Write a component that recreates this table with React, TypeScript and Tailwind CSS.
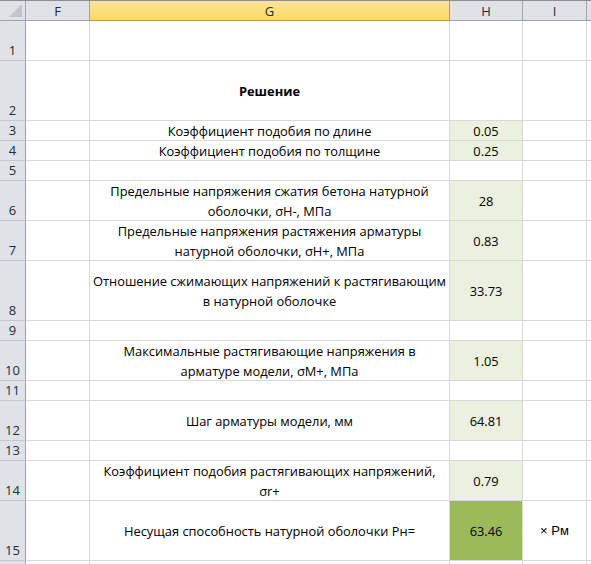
import React from "react";

type Row = {
  n: number;
  h: string;
  g?: string[];
  bold?: boolean;
  v?: string;
  hBg: string;
  i?: string;
};

const rows: Row[] = [
  { n: 1, h: "h-[40px]", hBg: "bg-white" },
  { n: 2, h: "h-[60px]", g: ["Решение"], bold: true, hBg: "bg-white" },
  { n: 3, h: "h-[20px]", g: ["Коэффициент подобия по длине"], v: "0.05", hBg: "bg-[#ebf1de]" },
  { n: 4, h: "h-[20px]", g: ["Коэффициент подобия по толщине"], v: "0.25", hBg: "bg-[#ebf1de]" },
  { n: 5, h: "h-[20px]", hBg: "bg-white" },
  {
    n: 6,
    h: "h-[40px]",
    g: ["Предельные напряжения сжатия бетона натурной", "оболочки, σН-, МПа"],
    v: "28",
    hBg: "bg-[#ebf1de]",
  },
  {
    n: 7,
    h: "h-[40px]",
    g: ["Предельные напряжения растяжения арматуры", "натурной оболочки, σН+, МПа"],
    v: "0.83",
    hBg: "bg-[#ebf1de]",
  },
  {
    n: 8,
    h: "h-[60px]",
    g: ["Отношение сжимающих напряжений к растягивающим", "в натурной оболочке"],
    v: "33.73",
    hBg: "bg-[#ebf1de]",
  },
  { n: 9, h: "h-[20px]", hBg: "bg-white" },
  {
    n: 10,
    h: "h-[40px]",
    g: ["Максимальные растягивающие напряжения в", "арматуре модели, σМ+, МПа"],
    v: "1.05",
    hBg: "bg-[#ebf1de]",
  },
  { n: 11, h: "h-[20px]", hBg: "bg-white" },
  { n: 12, h: "h-[40px]", g: ["Шаг арматуры модели, мм"], v: "64.81", hBg: "bg-[#ebf1de]" },
  { n: 13, h: "h-[20px]", hBg: "bg-white" },
  {
    n: 14,
    h: "h-[40px]",
    g: ["Коэффициент подобия растягивающих напряжений,", "σr+"],
    v: "0.79",
    hBg: "bg-[#ebf1de]",
  },
  {
    n: 15,
    h: "h-[60px]",
    g: ["Несущая способность натурной оболочки Рн="],
    v: "63.46",
    hBg: "bg-[#9bbb59]",
    i: "× Рм",
  },
];

export default function App() {
  return (
    <div
      className="w-[591px] h-[564px] overflow-hidden bg-white text-black text-[12.85px] leading-[20px]"
      style={{ fontFamily: '"Open Sans", "Noto Sans", sans-serif' }}
    >
      {/* header */}
      <div className="flex h-[21px] border-t border-[#8e8e8e] bg-[#dfe3e8] text-[13px]">
        <div className="relative w-[26px] shrink-0 border-r border-b border-[#9ea3a9]">
          <div className="absolute right-[3px] bottom-[3px] w-0 h-0 border-l-[13px] border-l-transparent border-b-[13px] border-b-[#bfc5cc]" />
        </div>
        <div className="w-[64px] shrink-0 flex items-center justify-center border-r border-b border-[#9ea3a9] text-[#1e2b3c]">
          F
        </div>
        <div className="w-[360px] shrink-0 flex items-center justify-center border-r border-b border-r-[#c29a42] border-b-[#c29a42] bg-gradient-to-b from-[#fde39b] to-[#ffd95c] text-[#1e2b3c]">
          G
        </div>
        <div className="w-[73px] shrink-0 flex items-center justify-center border-r border-b border-[#9ea3a9] text-[#1e2b3c]">
          H
        </div>
        <div className="w-[64px] shrink-0 flex items-center justify-center border-r border-b border-[#9ea3a9] text-[#1e2b3c]">
          I
        </div>
        <div className="flex-1 border-b border-[#9ea3a9]" />
      </div>
      {rows.map((r) => (
        <div key={r.n} className={`flex ${r.h}`}>
          <div className="w-[26px] shrink-0 bg-[#dfe3e8] border-r border-r-[#9ea3a9] border-b border-b-[#c3c8ce] flex items-end justify-center text-[#1e2b3c] text-[13px] leading-[18px] pb-[1px]">
            {r.n}
          </div>
          <div className="w-[64px] shrink-0 border-r border-b border-[#d9d9d9]" />
          <div
            className={`w-[360px] shrink-0 border-r border-b border-[#d9d9d9] flex flex-col items-center justify-center text-center whitespace-nowrap ${
              r.bold ? "font-bold" : ""
            }`}
          >
            {r.g?.map((l, k) => (
              <div key={k}>{l}</div>
            ))}
          </div>
          <div
            className={`w-[73px] shrink-0 border-r border-b border-[#d9d9d9] flex items-center justify-center ${r.hBg}`}
          >
            {r.v}
          </div>
          <div
            className="w-[64px] shrink-0 border-r border-b border-[#d9d9d9] flex items-center justify-center text-[13px]"
            style={{ fontFamily: '"Liberation Sans", Arial, sans-serif' }}
          >
            {r.i}
          </div>
          <div className="flex-1 border-b border-[#d9d9d9]" />
        </div>
      ))}
      <div className="flex h-[20px]">
        <div className="w-[26px] shrink-0 bg-[#dfe3e8] border-r border-[#9ea3a9]" />
        <div className="w-[64px] shrink-0 border-r border-[#d9d9d9]" />
        <div className="w-[360px] shrink-0 border-r border-[#d9d9d9]" />
        <div className="w-[73px] shrink-0 border-r border-[#d9d9d9]" />
        <div className="w-[64px] shrink-0 border-r border-[#d9d9d9]" />
      </div>
    </div>
  );
}
